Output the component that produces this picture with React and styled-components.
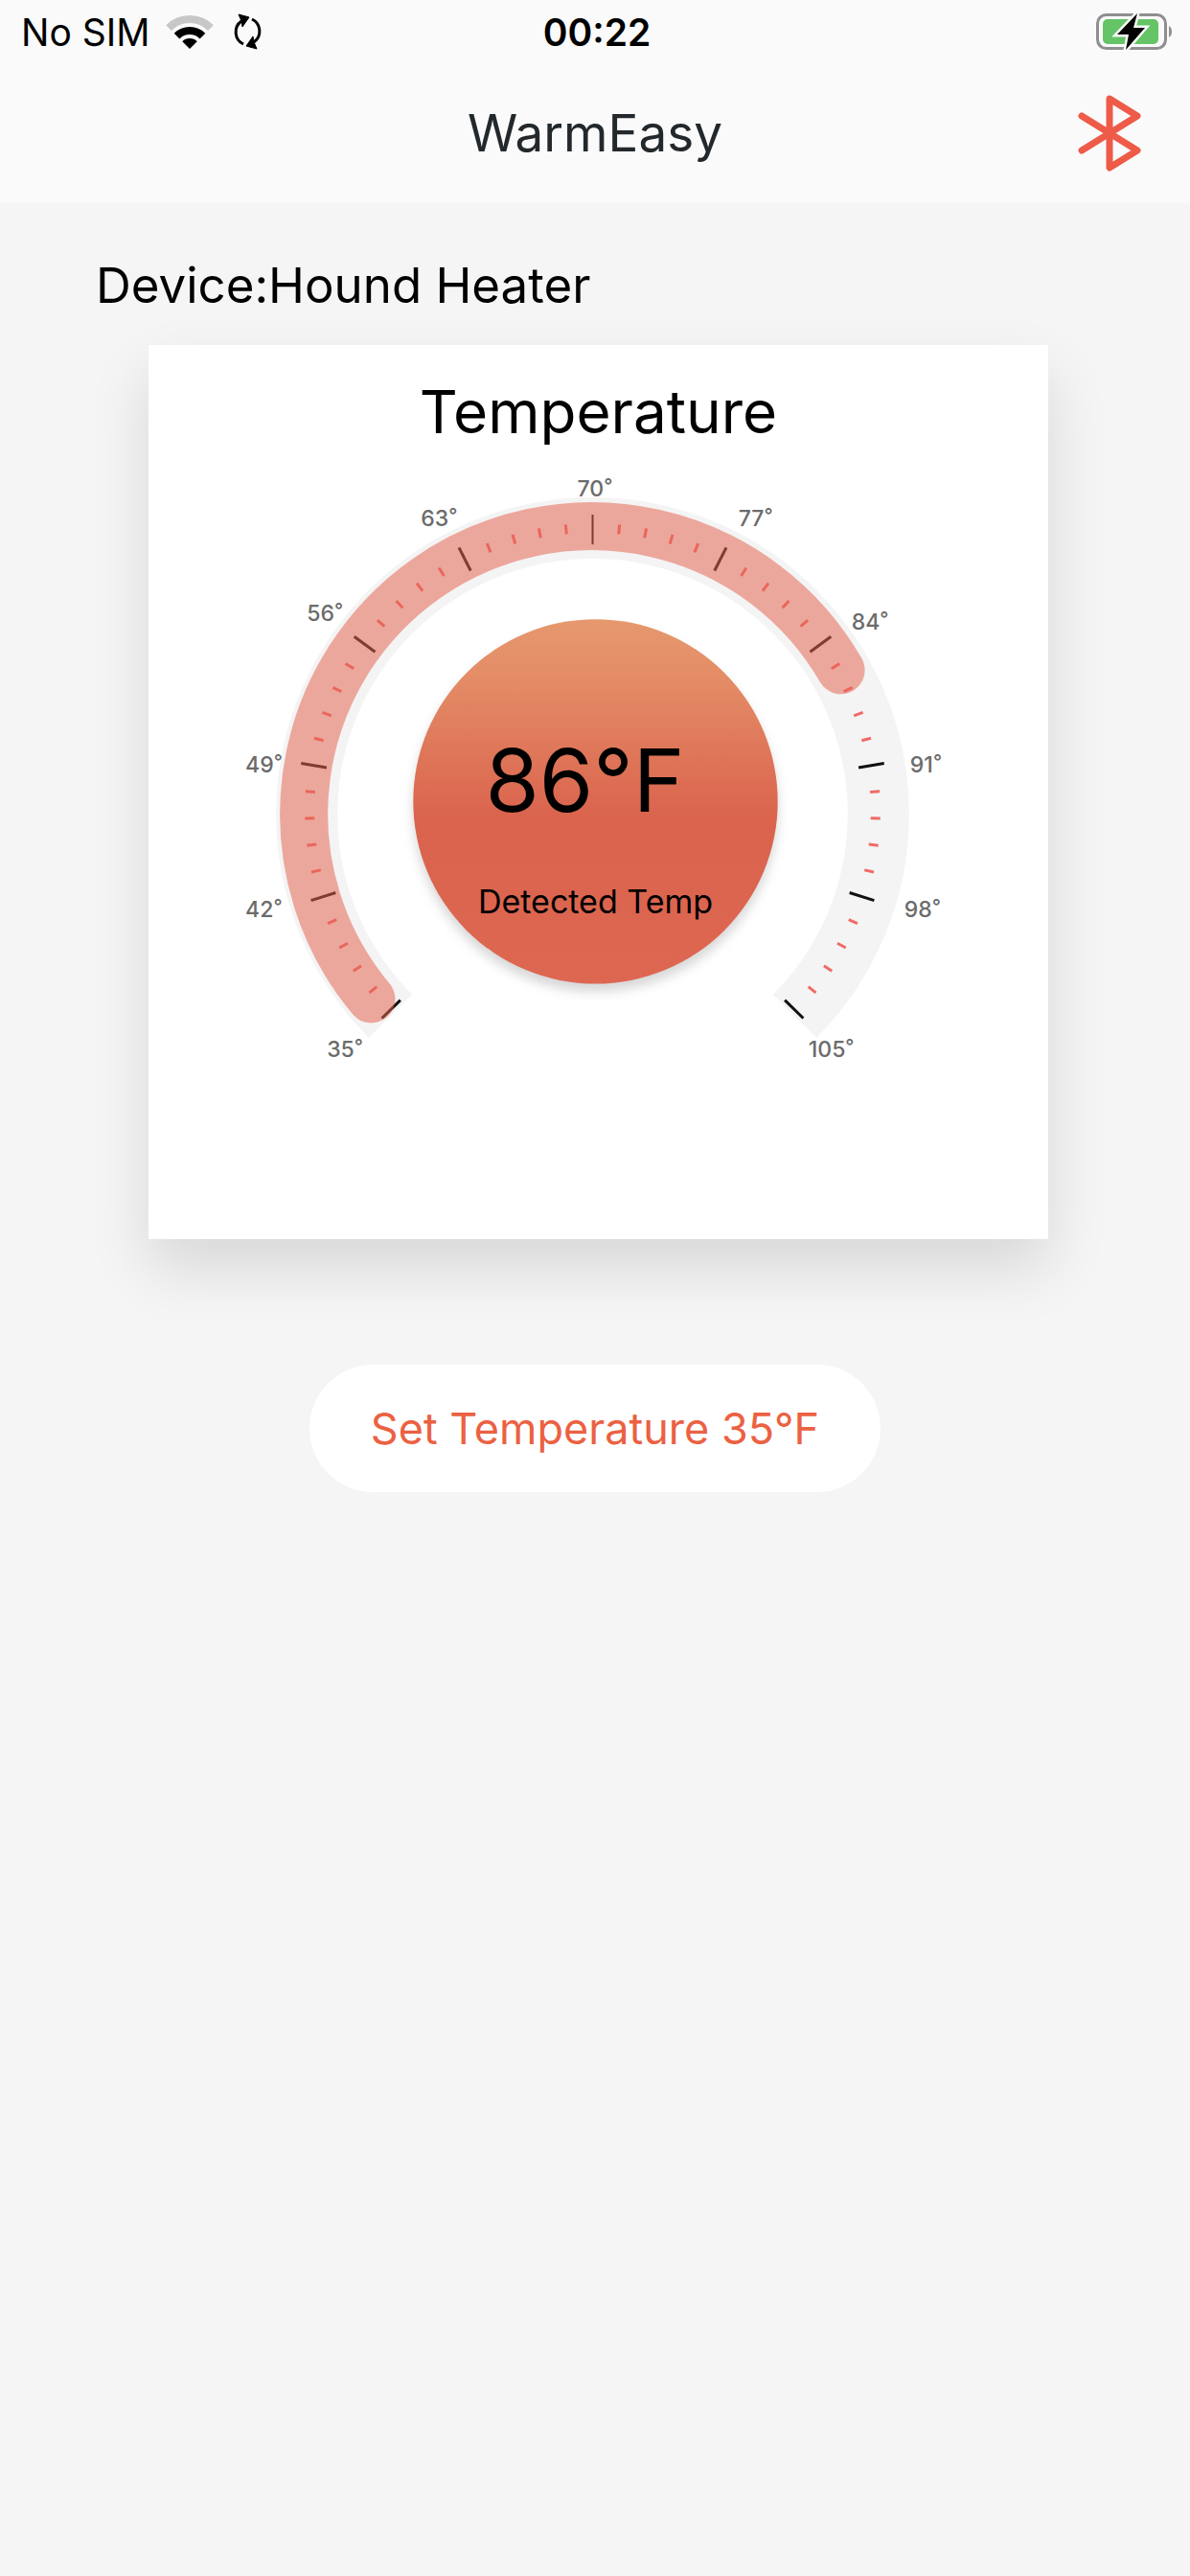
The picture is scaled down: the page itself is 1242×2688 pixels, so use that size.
import React from "react";
import styled, { createGlobalStyle } from "styled-components";

const CENTER_X = 463;
const CENTER_Y = 379;
const TICK_CENTER_Y = 376;
const SPAN = 269;
const TICKS = 50;

const LABELS = [
  { value: 35, x: 186, y: 632 },
  { value: 42, x: 101, y: 486 },
  { value: 49, x: 101, y: 336 },
  { value: 56, x: 165, y: 178 },
  { value: 63, x: 284, y: 79 },
  { value: 70, x: 447, y: 48 },
  { value: 77, x: 615, y: 79 },
  { value: 84, x: 733, y: 187 },
  { value: 91, x: 794, y: 336 },
  { value: 98, x: 788, y: 486 },
  { value: 105, x: 688, y: 632 },
];

// angle in degrees, 0 = right, clockwise
const point = (angle, radius, cx = CENTER_X, cy = CENTER_Y) => {
  const rad = (angle * Math.PI) / 180;
  return [cx + radius * Math.cos(rad), cy + radius * Math.sin(rad)];
};

const arc = (from, to, radius, cx, cy) => {
  const [x1, y1] = point(from, radius, cx, cy);
  const [x2, y2] = point(to, radius, cx, cy);
  const large = to - from > 180 ? 1 : 0;
  return `M${x1} ${y1}A${radius} ${radius} 0 ${large} 1 ${x2} ${y2}`;
};

// inner and outer radius of each kind of tick
const TICK_RADII = {
  top: [278, 309],
  major: [281, 308],
  minor: [290, 300],
};

const tickKind = (i) => {
  if (i === TICKS / 2) return "top";
  return i % 5 === 0 ? "major" : "minor";
};

const ticks = Array.from({ length: TICKS + 1 }, (_, i) => {
  const kind = tickKind(i);
  const angle = -90 - SPAN / 2 + (i * SPAN) / TICKS;
  const [inner, outer] = TICK_RADII[kind];
  const [x1, y1] = point(angle, inner, CENTER_X, TICK_CENTER_Y);
  const [x2, y2] = point(angle, outer, CENTER_X, TICK_CENTER_Y);
  return { i, kind, x1, y1, x2, y2 };
});

export default function App() {
  return (
    <>
      <GlobalStyle />
      <Page>
        <Header>
          <StatusBar>
            <StatusGroup>
              <span>No SIM</span>
              <WifiIcon />
              <SyncIcon />
            </StatusGroup>
            <Clock>00:22</Clock>
            <StatusGroup $end>
              <BatteryIcon />
            </StatusGroup>
          </StatusBar>
          <NavBar>
            <AppTitle>WarmEasy</AppTitle>
            <BluetoothButton type="button" aria-label="Bluetooth">
              <BluetoothIcon />
            </BluetoothButton>
          </NavBar>
        </Header>
        <Main>
          <DeviceName>Device:Hound Heater</DeviceName>
          <Card>
            <CardTitle>Temperature</CardTitle>
            <Gauge />
          </Card>
          <SetButton type="button">Set Temperature 35°F</SetButton>
        </Main>
      </Page>
    </>
  );
}

function Gauge() {
  return (
    <GaugeSvg viewBox="0 0 938 800" role="img" aria-label="Detected Temp 86°F">
      <defs>
        <linearGradient id="heat" x1="0" y1="0" x2="0" y2="1">
          <stop offset="0" stopColor="#e6986d" />
          <stop offset="0.15" stopColor="#e48d67" />
          <stop offset="0.55" stopColor="#da634d" />
          <stop offset="1" stopColor="#de6752" />
        </linearGradient>
      </defs>
      <Track d={arc(135, 405, 298)} />
      {ticks.map((t) => (
        <Tick key={t.i} $kind={t.kind} x1={t.x1} y1={t.y1} x2={t.x2} y2={t.y2} />
      ))}
      <Progress d={arc(140, 330, 300, 462, 379)} />
      {LABELS.map(({ value, x, y }) => (
        <ScaleLabel key={value} x={x} y={y}>
          {value}
          <Degree dy="-4">°</Degree>
        </ScaleLabel>
      ))}
      <Dial cx="466" cy="366" r="190" />
      <Reading x="455" y="377">
        86°F
      </Reading>
      <ReadingLabel x="466" y="482">
        Detected Temp
      </ReadingLabel>
    </GaugeSvg>
  );
}

function WifiIcon() {
  return (
    <svg width="50" height="38" viewBox="0 0 50 38" fill="none">
      <path d={arc(225, 315, 31, 25, 37)} stroke="#c7c7c7" strokeWidth="8" />
      <path d={arc(225, 315, 19, 25, 37)} stroke="#000" strokeWidth="8" />
      <path d={`${arc(225, 315, 11, 25, 37)}L25 37Z`} fill="#000" />
    </svg>
  );
}

function SyncIcon() {
  return (
    <svg width="36" height="38" viewBox="0 0 36 38" fill="none">
      <path d="M14 32A14 14 0 0 1 12 8" stroke="#000" strokeWidth="3" />
      <path d="M23 6A14 14 0 0 1 25 30" stroke="#000" strokeWidth="3" />
      <path d="M9 1L20 4L13 14L12 8Z" fill="#000" stroke="#000" strokeLinejoin="round" />
      <path d="M28 37L17 34L24 24L25 30Z" fill="#000" stroke="#000" strokeLinejoin="round" />
    </svg>
  );
}

function BatteryIcon() {
  return (
    <svg width="80" height="42" viewBox="0 0 80 42" fill="none">
      <rect x="1.5" y="3.5" width="71" height="35" rx="9" stroke="#8f8f8f" strokeWidth="3" />
      <path d="M76 15C80 17 80 25 76 27Z" fill="#8f8f8f" />
      <rect x="7" y="8" width="58" height="26" rx="5" fill="#65c466" />
      <path
        d="M43 2L22 24H34L31 40L51 17H39Z"
        fill="#000"
        stroke="#fafafa"
        strokeWidth="5"
        paintOrder="stroke"
      />
    </svg>
  );
}

function BluetoothIcon() {
  return (
    <svg width="66" height="80" viewBox="0 0 66 80" fill="none">
      <path
        d="M4 22L62 58L33 76V4L62 22L4 58"
        stroke="#ee5b48"
        strokeWidth="7"
        strokeLinecap="round"
        strokeLinejoin="round"
      />
    </svg>
  );
}

// Styled Components
const GlobalStyle = createGlobalStyle`
  * {
    box-sizing: border-box;
  }

  body {
    margin: 0;
    background-color: #f5f5f5;
    color: #000000;
    font-family: Inter, "Liberation Sans", sans-serif;
  }
`;

const Page = styled.div`
  min-height: 100vh;
  background-color: #f5f5f5;
`;

const Header = styled.header`
  background-color: #fafafa;
`;

const StatusBar = styled.div`
  display: grid;
  grid-template-columns: 1fr auto 1fr;
  align-items: center;
  height: 66px;
  padding: 0 18px 0 22px;
  font-size: 39px;
`;

const StatusGroup = styled.div`
  display: flex;
  align-items: center;
  justify-content: ${({ $end }) => ($end ? "flex-end" : "flex-start")};
  gap: 17px;
`;

const Clock = styled.time`
  font-size: 39px;
  font-weight: 600;
`;

const NavBar = styled.div`
  display: grid;
  grid-template-columns: 1fr auto 1fr;
  align-items: center;
  height: 146px;
  padding: 0 51px;
`;

const AppTitle = styled.h1`
  grid-column: 2;
  margin: 0;
  color: #22282b;
  font-size: 53px;
  font-weight: 400;
`;

const BluetoothButton = styled.button`
  display: flex;
  justify-self: end;
  padding: 0;
  border: none;
  background: none;
  cursor: pointer;
`;

const Main = styled.main`
  display: flex;
  flex-direction: column;
  padding: 52px 0;
`;

const DeviceName = styled.h2`
  margin: 0 100px 28px;
  font-size: 51px;
  font-weight: 400;
  line-height: 68px;
`;

const Card = styled.section`
  margin: 0 148px 0 155px;
  padding: 30px 0 22px;
  background-color: #ffffff;
  box-shadow: 0 30px 60px rgba(0, 0, 0, 0.12);
`;

const CardTitle = styled.h3`
  margin: 0;
  font-size: 62px;
  font-weight: 400;
  line-height: 80px;
  text-align: center;
`;

const GaugeSvg = styled.svg`
  display: block;
  width: 100%;
  height: auto;
`;

const Track = styled.path`
  fill: none;
  stroke: #f4f4f4;
  stroke-width: 64px;
`;

const Progress = styled.path`
  fill: none;
  stroke: rgba(229, 98, 80, 0.53);
  stroke-width: 50px;
  stroke-linecap: round;
`;

const Tick = styled.line`
  stroke: ${({ $kind }) => ($kind === "minor" ? "#f06a66" : "#111111")};
  stroke-width: ${({ $kind }) => ($kind === "top" ? "2px" : "3px")};
`;

const ScaleLabel = styled.text`
  fill: #6b6b6b;
  font-size: 23px;
  font-weight: 500;
`;

const Degree = styled.tspan`
  font-size: 20px;
`;

const Dial = styled.circle`
  fill: url(#heat);
  filter: drop-shadow(0 8px 6px rgba(0, 0, 0, 0.16));
`;

const Reading = styled.text`
  font-size: 91px;
  text-anchor: middle;
`;

const ReadingLabel = styled.text`
  font-size: 34px;
  text-anchor: middle;
`;

const SetButton = styled.button`
  align-self: center;
  height: 133px;
  margin-top: 131px;
  padding: 0 64px;
  border: none;
  border-radius: 67px;
  background-color: #ffffff;
  color: #eb6142;
  font-family: inherit;
  font-size: 45px;
  cursor: pointer;
`;
